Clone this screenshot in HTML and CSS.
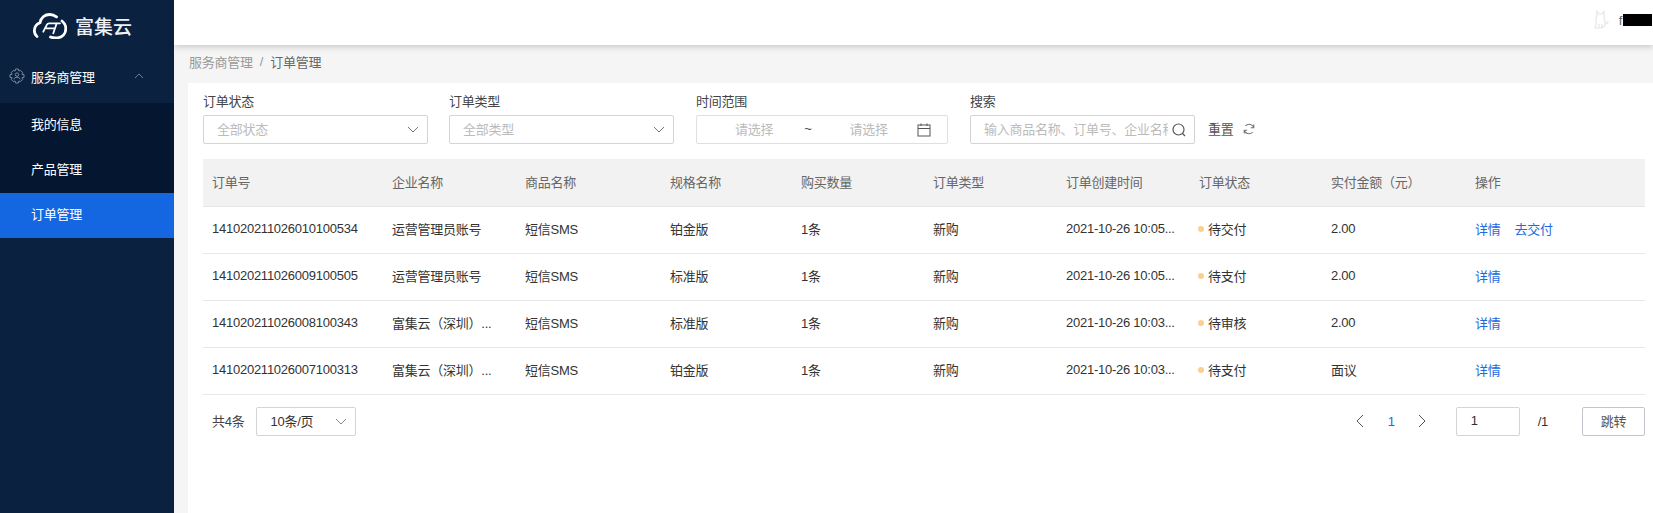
FILE: index.html
```html
<!DOCTYPE html>
<html lang="zh-CN">
<head>
    <meta charset="UTF-8">
    <meta name="viewport" content="width=device-width, initial-scale=1.0">
    <title>订单管理</title>
    <link rel="stylesheet" href="styles.css">
</head>
<body>

<div class="layout">
    <aside class="sidebar">
        <div class="logo">
            <svg class="logo-mark" viewBox="0 0 34 26" fill="none" stroke="#fff" stroke-width="2.800" stroke-linecap="round">
                <path d="M4 23.500C2 22 1.200 19.500 1.400 17C1.700 13.500 3.800 11 7 9.800C8 4.500 12 1.500 16.800 1.500C19.500 1.500 21.500 2.300 23.500 3.800"/>
                <path d="M29 8C31.500 10 32.800 12.500 32.800 15.500C32.800 20.500 29.500 24 25 24.800C22 25.100 19.500 24.800 17.500 24"/>
                <path stroke-width="1.800" d="M10.300 18.700L13.800 11.800C14.300 10.800 15 10.300 16 10.300H27M23.700 10.300L20.300 20.300M13.700 15.300H22"/>
            </svg>
            <span class="logo-text">富集云</span>
        </div>
        <div class="menu-title">
            <svg class="gear" viewBox="0 0 16 16" fill="none" stroke="#7b899c" stroke-width="1">
                <path d="M6.600 1H9.400L9.900 3L11.700 2.500L13.700 4.500L12.900 6.200L15 6.700V9.300L12.900 9.800L13.700 11.500L11.700 13.500L9.900 13L9.400 15H6.600L6.100 13L4.300 13.500L2.300 11.500L3.100 9.800L1 9.300V6.700L3.100 6.200L2.300 4.500L4.300 2.500L6.100 3Z"/>
                <circle cx="8" cy="6.600" r="1.700"/>
                <path d="M4.800 11.300C5.300 9.900 6.500 9.300 8 9.300C9.500 9.300 10.700 9.900 11.200 11.300"/>
            </svg>
            <span>服务商管理</span>
            <svg class="arrow-up" viewBox="0 0 10 6" fill="none" stroke="#6f7e92" stroke-width="1"><path d="M1 5L5 1L9 5"/></svg>
        </div>
        <ul class="submenu">
            <li>我的信息</li>
            <li>产品管理</li>
            <li class="active">订单管理</li>
        </ul>
    </aside>

    <div class="main">
        <header class="topbar">
            <svg class="avatar" viewBox="0 0 16 20" fill="none" stroke="#e6e6e6" stroke-width="1.200">
                <path d="M4 1L6 4H9L11 1.500V7C11 9 12 11 12 13C12 16 10 18 7 18H2C3 16 3 15 3.500 13C2.500 11 3 8 4 6Z"/>
                <path d="M12 14C14 14 15 13 15 11M6 18V14M9 18V14"/>
            </svg>
            <span class="user">f<span class="redact"></span></span>
        </header>

        <div class="breadcrumb">
            <span>服务商管理</span>
            <span class="sep">/</span>
            <span class="current">订单管理</span>
        </div>

        <div class="card">
            <div class="filters">
                <div class="field">
                    <label>订单状态</label>
                    <div class="control">
                        <span class="placeholder">全部状态</span>
                        <svg class="chevron" viewBox="0 0 12 7" fill="none" stroke="#777" stroke-width="1"><path d="M1 1L6 6L11 1"/></svg>
                    </div>
                </div>
                <div class="field">
                    <label>订单类型</label>
                    <div class="control">
                        <span class="placeholder">全部类型</span>
                        <svg class="chevron" viewBox="0 0 12 7" fill="none" stroke="#777" stroke-width="1"><path d="M1 1L6 6L11 1"/></svg>
                    </div>
                </div>
                <div class="field field-date">
                    <label>时间范围</label>
                    <div class="control control-date">
                        <span class="placeholder">请选择</span>
                        <span class="tilde">~</span>
                        <span class="placeholder">请选择</span>
                        <svg class="calendar" viewBox="0 0 14 14" fill="none" stroke="#555" stroke-width="1"><rect x="1" y="2" width="12" height="11"/><path d="M1 5.500H13M4 .5V3M10 .5V3"/></svg>
                    </div>
                </div>
                <div class="field field-search">
                    <label>搜索</label>
                    <div class="control control-search">
                        <span class="placeholder search-text">输入商品名称、订单号、企业名称</span>
                        <svg class="search-icon" viewBox="0 0 14 14" fill="none" stroke="#555" stroke-width="1.200"><circle cx="6.500" cy="6.500" r="5.500"/><path d="M10.500 10.500L13 13"/></svg>
                    </div>
                </div>
                <div class="reset">
                    <span>重置</span>
                    <svg class="reset-icon" viewBox="0 0 12 12" fill="none" stroke="#777" stroke-width="1.100"><path d="M10.500 4.500C9.800 2.500 8 1.300 6 1.300C4.500 1.300 3.200 2 2.300 3M1.500 7.500C2.200 9.500 4 10.700 6 10.700C7.500 10.700 8.800 10 9.700 9M10.800 1.500V4.700H7.800M1.200 10.500V7.300H4.200"/></svg>
                </div>
            </div>

            <table class="orders">
                <colgroup>
                    <col class="c-no"><col class="c-company"><col class="c-goods"><col class="c-spec"><col class="c-num">
                    <col class="c-type"><col class="c-time"><col class="c-status"><col class="c-amount"><col class="c-op">
                </colgroup>
                <thead>
                    <tr>
                        <th>订单号</th><th>企业名称</th><th>商品名称</th><th>规格名称</th><th>购买数量</th>
                        <th>订单类型</th><th>订单创建时间</th><th>订单状态</th><th>实付金额<span class="paren" lang="zh-TW">（</span>元<span class="paren" lang="zh-TW">）</span></th><th>操作</th>
                    </tr>
                </thead>
                <tbody>
                    <tr>
                        <td>141020211026010100534</td><td>运营管理员账号</td><td>短信SMS</td><td>铂金版</td><td>1条</td>
                        <td>新购</td><td>2021-10-26 10:05...</td><td><i class="dot"></i>待交付</td><td>2.00</td>
                        <td><a class="link">详情</a><a class="link">去交付</a></td>
                    </tr>
                    <tr>
                        <td>141020211026009100505</td><td>运营管理员账号</td><td>短信SMS</td><td>标准版</td><td>1条</td>
                        <td>新购</td><td>2021-10-26 10:05...</td><td><i class="dot"></i>待支付</td><td>2.00</td>
                        <td><a class="link">详情</a></td>
                    </tr>
                    <tr>
                        <td>141020211026008100343</td><td>富集云<span class="paren" lang="zh-TW">（</span>深圳<span class="paren" lang="zh-TW">）</span>...</td><td>短信SMS</td><td>标准版</td><td>1条</td>
                        <td>新购</td><td>2021-10-26 10:03...</td><td><i class="dot"></i>待审核</td><td>2.00</td>
                        <td><a class="link">详情</a></td>
                    </tr>
                    <tr>
                        <td>141020211026007100313</td><td>富集云<span class="paren" lang="zh-TW">（</span>深圳<span class="paren" lang="zh-TW">）</span>...</td><td>短信SMS</td><td>铂金版</td><td>1条</td>
                        <td>新购</td><td>2021-10-26 10:03...</td><td><i class="dot"></i>待支付</td><td>面议</td>
                        <td><a class="link">详情</a></td>
                    </tr>
                </tbody>
            </table>

            <div class="pager">
                <div class="pager-left">
                    <span class="total">共4条</span>
                    <div class="control control-size">
                        <span>10条/页</span>
                        <svg class="chevron" viewBox="0 0 12 7" fill="none" stroke="#888" stroke-width="1"><path d="M1 1L6 6L11 1"/></svg>
                    </div>
                </div>
                <div class="pager-right">
                    <svg class="page-arrow" viewBox="0 0 8 14" fill="none" stroke="#555" stroke-width="1"><path d="M7 1L1 7L7 13"/></svg>
                    <span class="page-current">1</span>
                    <svg class="page-arrow" viewBox="0 0 8 14" fill="none" stroke="#555" stroke-width="1"><path d="M1 1L7 7L1 13"/></svg>
                    <div class="control page-input">1</div>
                    <span class="page-total">/1</span>
                    <div class="page-go">跳转</div>
                </div>
            </div>
        </div>
    </div>
</div>

</body>
</html>
```

FILE: styles.css
```css
* {
    box-sizing: border-box;
}
html, body {
    height: 100%;
}
body {
    margin: 0;
    overflow: hidden;
    font-family: "Liberation Sans", "Noto Sans CJK SC", sans-serif;
    font-size: 13px;
    letter-spacing: -0.25px;
    color: #333;
    background-color: #f5f5f5;
}
.layout {
    display: flex;
    height: 100%;
}

/* sidebar */
.sidebar {
    flex: 0 0 174px;
    background-color: #0a2240;
    color: #fff;
}
.logo {
    display: flex;
    align-items: center;
    height: 51px;
    padding-left: 33px;
}
.logo-mark {
    width: 34px;
    height: 26px;
}
.logo-text {
    margin-left: 8px;
    font-size: 19px;
    font-weight: 500;
    letter-spacing: 0;
    color: #eef1f4;
}
.menu-title {
    display: flex;
    align-items: center;
    height: 52px;
    padding: 0 0 2px 9px;
}
.gear {
    width: 16px;
    height: 16px;
    margin-right: 6px;
}
.arrow-up {
    width: 10px;
    height: 6px;
    margin-left: 39px;
}
.submenu {
    list-style: none;
    margin: 0;
    padding: 0;
    background-color: #051630;
}
.submenu li {
    height: 45px;
    line-height: 43px;
    padding-left: 31px;
}
.submenu li.active {
    background-color: #1467e0;
}

/* right side */
.main {
    flex: 1;
    display: flex;
    flex-direction: column;
    min-width: 0;
}
.topbar {
    position: relative;
    z-index: 1;
    display: flex;
    align-items: center;
    justify-content: flex-end;
    height: 45px;
    flex-shrink: 0;
    padding-bottom: 5px;
    background-color: #fff;
    box-shadow: 0 2px 6px rgba(0,0,0,0.18);
}
.avatar {
    width: 16px;
    height: 20px;
    margin-right: 10px;
}
.user {
    display: flex;
    align-items: center;
    color: #666;
    margin-right: 1px;
}
.redact {
    display: block;
    width: 29px;
    height: 12px;
    margin-left: 1px;
    background-color: #000;
}
.breadcrumb {
    display: flex;
    align-items: center;
    height: 38px;
    padding: 0 0 5px 15px;
    color: #999;
}
.breadcrumb .sep {
    margin: 0 7px;
}
.breadcrumb .current {
    color: #666;
}
.card {
    flex: 1;
    margin-left: 14px;
    padding: 12px 8px 0 15px;
    background-color: #fff;
}

/* filters */
.filters {
    display: flex;
    align-items: flex-end;
    gap: 21px;
    margin-bottom: 15px;
}
.field {
    width: 225px;
}
.field-date {
    width: 252px;
    margin-left: 1px;
}
.field-search {
    margin-left: 1px;
}
.field label {
    display: block;
    height: 20px;
    line-height: 14px;
    color: #444;
}
.control {
    display: flex;
    align-items: center;
    height: 29px;
    padding: 0 8px 2px 13px;
    background-color: #fff;
    border: 1px solid #d4d4d4;
    border-radius: 2px;
}
.placeholder {
    color: #bbb;
}
.chevron {
    width: 12px;
    height: 7px;
    margin: 2px 0 0 auto;
}
.control-date {
    padding: 0 16px 2px 38px;
    border-color: #e0e0e4;
}
.tilde {
    margin: 0 38px 0 31px;
    color: #444;
}
.calendar {
    width: 14px;
    height: 14px;
    margin: 2px 0 0 auto;
}
.control-search {
    padding-right: 8px;
}
.search-text {
    flex: 0 0 184px;
    overflow: hidden;
    white-space: nowrap;
}
.search-icon {
    width: 14px;
    height: 14px;
    margin: 2px 0 0 auto;
}
.reset {
    display: flex;
    align-items: center;
    gap: 9px;
    height: 29px;
    margin-left: -8px;
    padding-bottom: 2px;
    color: #555;
}
.reset-icon {
    width: 12px;
    height: 12px;
}

/* table */
.orders {
    width: 1442px;
    border-collapse: collapse;
    table-layout: fixed;
}
.c-no { width: 180px; }
.c-company { width: 133px; }
.c-goods { width: 145px; }
.c-spec { width: 131px; }
.c-num { width: 132px; }
.c-type { width: 133px; }
.c-time { width: 133px; }
.c-status { width: 132px; }
.c-amount { width: 144px; }
.c-op { width: 179px; }
.orders th {
    height: 47px;
    padding: 0 9px 2px;
    text-align: left;
    font-weight: normal;
    color: #666;
    background-color: #f2f2f2;
    border-bottom: 1px solid #e6e6e6;
}
.orders td {
    height: 47px;
    padding: 0 9px 2px;
    white-space: nowrap;
    border-bottom: 1px solid #e8e8ec;
}
/* the TC font centres full-width brackets */
.paren {
    font-family: "Noto Sans CJK TC", sans-serif;
}
.dot {
    display: inline-block;
    width: 6px;
    height: 6px;
    margin: 0 4px 0 -1px;
    vertical-align: 2px;
    border-radius: 50%;
    background-color: #fbd08f;
}
.link {
    margin-right: 14px;
    color: #2468e0;
    cursor: pointer;
}

/* pagination */
.pager {
    display: flex;
    justify-content: space-between;
    width: 1442px;
    padding: 12px 0 0 9px;
}
.pager-left, .pager-right {
    display: flex;
    align-items: center;
}
.total {
    margin-right: 12px;
    padding-bottom: 1px;
    color: #444;
}
.control-size {
    width: 100px;
    height: 29px;
}
.page-arrow {
    width: 8px;
    height: 14px;
}
.page-current {
    margin: 0 23px 0 24px;
    color: #2468e0;
}
.page-input {
    width: 64px;
    margin-left: 30px;
    padding-left: 14px;
}
.page-total {
    margin: 0 34px 0 18px;
}
.page-go {
    display: flex;
    align-items: center;
    justify-content: center;
    width: 63px;
    height: 29px;
    padding-bottom: 2px;
    border: 1px solid #c4c4cc;
    border-radius: 2px;
    color: #555;
}
```
